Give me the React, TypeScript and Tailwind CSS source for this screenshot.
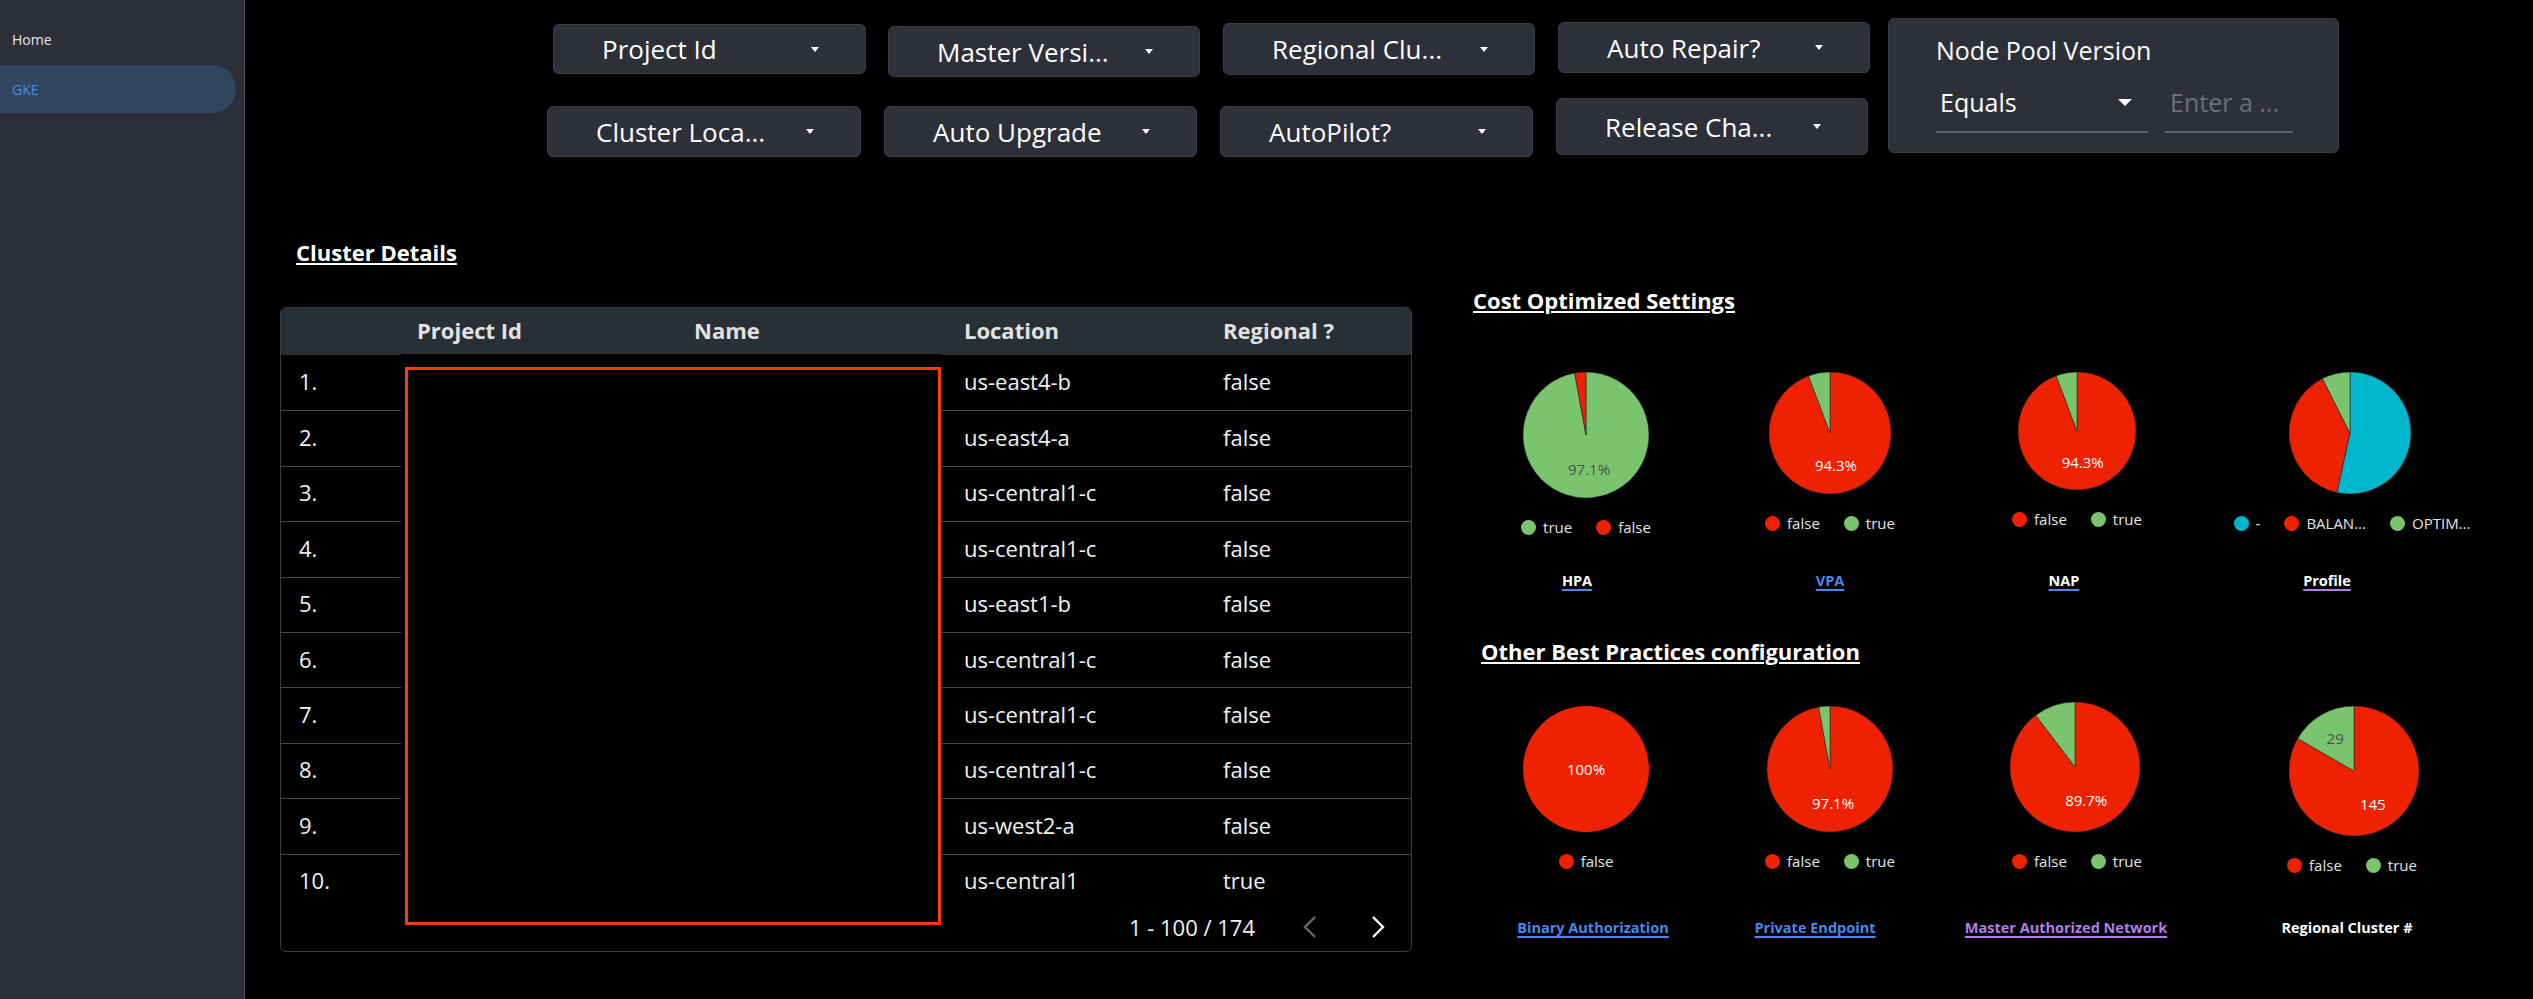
import React from 'react';

type Slice = { value: number; color: string; label?: string; labelColor?: string };
type LegendItem = { color: string; text: string };
type Chart = {
  size: number;
  slices: Slice[];
  labelDist?: number;
  pieClass: string;
  legend: LegendItem[];
  title: string;
  titleClass: string;
};

const RED = '#ee2200';
const GREEN = '#7bc46e';
const CYAN = '#00b6cc';

const FILTER_COLS = [
  {
    colClass: 'w-[319px]',
    top: { label: 'Project Id', className: 'mt-[6px] ml-[6px] h-[50px] w-[313px]' },
    bottom: { label: 'Cluster Loca...', className: 'mt-[32px] h-[51px] w-[314px]' },
  },
  {
    colClass: 'ml-[18px] w-[316px]',
    top: { label: 'Master Versi...', className: 'mt-[8px] ml-[4px] h-[51px] w-[312px]' },
    bottom: { label: 'Auto Upgrade', className: 'mt-[29px] h-[51px] w-[313px]' },
  },
  {
    colClass: 'ml-[20px] w-[315px]',
    top: { label: 'Regional Clu...', className: 'mt-[5px] ml-[3px] h-[52px] w-[312px]' },
    bottom: { label: 'AutoPilot?', className: 'mt-[31px] h-[51px] w-[313px]' },
  },
  {
    colClass: 'ml-[21px] w-[314px]',
    top: { label: 'Auto Repair?', className: 'mt-[4px] ml-[2px] h-[51px] w-[312px]' },
    bottom: { label: 'Release Cha...', className: 'mt-[25px] h-[57px] w-[312px]' },
  },
];

const ROWS = [
  ['1.', 'us-east4-b', 'false'],
  ['2.', 'us-east4-a', 'false'],
  ['3.', 'us-central1-c', 'false'],
  ['4.', 'us-central1-c', 'false'],
  ['5.', 'us-east1-b', 'false'],
  ['6.', 'us-central1-c', 'false'],
  ['7.', 'us-central1-c', 'false'],
  ['8.', 'us-central1-c', 'false'],
  ['9.', 'us-west2-a', 'false'],
  ['10.', 'us-central1', 'true'],
];

const CELL_WIDTHS = ['w-[252px]', 'w-[236px]', 'w-[258px]', 'w-[292px]'];

const LINK_BLUE = 'underline decoration-2 underline-offset-[3px] decoration-[#4a86ee]';
const LINK_PURPLE = 'underline decoration-2 underline-offset-[3px] decoration-[#b07ee6]';

const COST_CHARTS: Chart[] = [
  {
    size: 126,
    slices: [
      { value: 169, color: GREEN, label: '97.1%', labelColor: '#4d4d4d' },
      { value: 5, color: RED },
    ],
    pieClass: '',
    legend: [
      { color: GREEN, text: 'true' },
      { color: RED, text: 'false' },
    ],
    title: 'HPA',
    titleClass: `text-white ${LINK_BLUE} mr-[18px]`,
  },
  {
    size: 122,
    slices: [
      { value: 164, color: RED, label: '94.3%', labelColor: '#ffffff' },
      { value: 10, color: GREEN },
    ],
    pieClass: '',
    legend: [
      { color: RED, text: 'false' },
      { color: GREEN, text: 'true' },
    ],
    title: 'VPA',
    titleClass: `text-[#4a86ee] ${LINK_BLUE}`,
  },
  {
    size: 118,
    slices: [
      { value: 164, color: RED, label: '94.3%', labelColor: '#ffffff' },
      { value: 10, color: GREEN },
    ],
    pieClass: '',
    legend: [
      { color: RED, text: 'false' },
      { color: GREEN, text: 'true' },
    ],
    title: 'NAP',
    titleClass: `text-white ${LINK_BLUE} mr-[26px]`,
  },
  {
    size: 122,
    slices: [
      { value: 93, color: CYAN },
      { value: 68, color: RED },
      { value: 13, color: GREEN },
    ],
    pieClass: 'mr-[4px]',
    legend: [
      { color: CYAN, text: '-' },
      { color: RED, text: 'BALAN...' },
      { color: GREEN, text: 'OPTIM...' },
    ],
    title: 'Profile',
    titleClass: `text-white ${LINK_PURPLE} mr-[50px]`,
  },
];

const OTHER_CHARTS: Chart[] = [
  {
    size: 126,
    slices: [{ value: 174, color: RED, label: '100%', labelColor: '#ffffff' }],
    pieClass: 'mt-[40px]',
    legend: [{ color: RED, text: 'false' }],
    title: 'Binary Authorization',
    titleClass: `text-[#4a86ee] ${LINK_BLUE} ml-[14px]`,
  },
  {
    size: 126,
    slices: [
      { value: 169, color: RED, label: '97.1%', labelColor: '#ffffff' },
      { value: 5, color: GREEN },
    ],
    pieClass: 'mt-[40px]',
    legend: [
      { color: RED, text: 'false' },
      { color: GREEN, text: 'true' },
    ],
    title: 'Private Endpoint',
    titleClass: `text-[#4a86ee] ${LINK_BLUE} mr-[30px]`,
  },
  {
    size: 130,
    slices: [
      { value: 156, color: RED, label: '89.7%', labelColor: '#ffffff' },
      { value: 18, color: GREEN },
    ],
    pieClass: 'mt-[36px] mr-[4px]',
    legend: [
      { color: RED, text: 'false' },
      { color: GREEN, text: 'true' },
    ],
    title: 'Master Authorized Network',
    titleClass: `text-[#b07ee6] ${LINK_PURPLE} mr-[22px]`,
  },
  {
    size: 130,
    slices: [
      { value: 145, color: RED, label: '145', labelColor: '#ffffff' },
      { value: 29, color: GREEN, label: '29', labelColor: '#4d4d4d' },
    ],
    labelDist: 0.58,
    pieClass: 'mt-[40px] ml-[4px]',
    legend: [
      { color: RED, text: 'false' },
      { color: GREEN, text: 'true' },
    ],
    title: 'Regional Cluster #',
    titleClass: 'text-white mr-[10px]',
  },
];

const Caret = ({ big }: { big?: boolean }) =>
  big ? (
    <span className="h-0 w-0 border-x-[7.5px] border-t-[7px] border-x-transparent border-t-white" />
  ) : (
    <span className="h-0 w-0 border-x-[4.5px] border-t-[5px] border-x-transparent border-t-white" />
  );

const FilterBox = ({ label, className }: { label: string; className: string }) => (
  <div
    className={`flex items-center justify-between rounded-[6px] border border-[#3b3e46] bg-[#2d3038] pl-[48px] pr-[46px] text-[26px] leading-none text-white ${className}`}
  >
    <span>{label}</span>
    <Caret />
  </div>
);

const Pie = ({ size, slices, labelDist = 0.54 }: { size: number; slices: Slice[]; labelDist?: number }) => {
  const r = size / 2;
  const total = slices.reduce((s, x) => s + x.value, 0);
  const pt = (a: number, rad: number) => [r + rad * Math.sin(2 * Math.PI * a), r - rad * Math.cos(2 * Math.PI * a)];
  const parts = slices.reduce<{ s: Slice; a0: number; a1: number }[]>((list, s) => {
    const a0 = list.length ? list[list.length - 1].a1 : 0;
    list.push({ s, a0, a1: a0 + s.value / total });
    return list;
  }, []);

  return (
    <svg width={size} height={size} viewBox={`0 0 ${size} ${size}`}>
      {parts.map(({ s, a0, a1 }, i) => {
        if (a1 - a0 >= 0.9999) return <circle key={i} cx={r} cy={r} r={r} fill={s.color} />;
        const [x0, y0] = pt(a0, r);
        const [x1, y1] = pt(a1, r);
        const large = a1 - a0 > 0.5 ? 1 : 0;
        return (
          <path
            key={i}
            d={`M${r},${r} L${x0},${y0} A${r},${r} 0 ${large} 1 ${x1},${y1} Z`}
            fill={s.color}
            stroke="#2a2a2a"
            strokeWidth={0.6}
            strokeLinejoin="round"
          />
        );
      })}
      {parts.map(({ s, a0, a1 }, i) => {
        if (!s.label) return null;
        const [lx, ly] = a1 - a0 >= 0.9999 ? [r, r] : pt((a0 + a1) / 2, r * labelDist);
        return (
          <text
            key={`l${i}`}
            x={lx}
            y={ly}
            fill={s.labelColor}
            fontSize={15}
            fontFamily="'Open Sans', sans-serif"
            textAnchor="middle"
            dominantBaseline="central"
          >
            {s.label}
          </text>
        );
      })}
    </svg>
  );
};

const Legend = ({ items }: { items: LegendItem[] }) => (
  <div className="mt-[19.5px] flex h-[20px] items-center gap-[24px] text-[15px] text-[#e4e4e4]">
    {items.map((it) => (
      <div key={it.text} className="flex items-center gap-[7px]">
        <span className="h-[15px] w-[15px] rounded-full" style={{ backgroundColor: it.color }} />
        <span>{it.text}</span>
      </div>
    ))}
  </div>
);

const ChartRow = ({ charts, blockClass, topClass }: { charts: Chart[]; blockClass: string; topClass: string }) => (
  <div className="flex">
    {charts.map((c, i) => (
      <div key={c.title} className={`flex flex-col items-center ${CELL_WIDTHS[i]}`}>
        <div className={`flex flex-col items-center ${blockClass}`}>
          <div className={`${topClass} ${c.pieClass}`}>
            <Pie size={c.size} slices={c.slices} labelDist={c.labelDist} />
          </div>
          <Legend items={c.legend} />
        </div>
        <div className={`h-[20px] text-[14.5px] font-bold leading-[20px] ${c.titleClass}`}>{c.title}</div>
      </div>
    ))}
  </div>
);

const Chevron = ({ dir, color }: { dir: 'left' | 'right'; color: string }) => (
  <svg width="14" height="24" viewBox="0 0 14 24">
    <polyline
      points={dir === 'left' ? '12,2 2,12 12,22' : '2,2 12,12 2,22'}
      fill="none"
      stroke={color}
      strokeWidth="2.4"
    />
  </svg>
);

export default function App() {
  return (
    <div className="flex h-[999px] w-[2533px] overflow-hidden bg-black font-['Open_Sans',sans-serif] text-white">
      <aside className="w-[245px] shrink-0 border-r border-[#4b4e56] bg-[#2c2f37]">
        <div className="mt-[28px] h-[24px] pl-[12px] text-[14px] leading-[24px] text-[#e6e6e6]">Home</div>
        <div className="mt-[13px] flex h-[48px] w-[236px] items-center rounded-r-full bg-[#2f4560] pl-[12px] text-[14px] text-[#4a8fe4]">
          GKE
        </div>
      </aside>

      <main className="flex flex-1 flex-col">
        <div className="ml-[302px] mt-[18px] flex h-[139px] items-start">
          {FILTER_COLS.map((col) => (
            <div key={col.top.label} className={`flex flex-col ${col.colClass}`}>
              <FilterBox {...col.top} />
              <FilterBox {...col.bottom} />
            </div>
          ))}

          <div className="ml-[18px] h-[135px] w-[451px] rounded-[6px] border border-[#3b3e46] bg-[#2d3038] pl-[47px] pt-[14px]">
            <div className="text-[25px] leading-[34px] text-white">Node Pool Version</div>
            <div className="mt-[18px] flex items-end">
              <div className="flex w-[212px] items-center justify-between border-b-2 border-[#5d6068] pb-[12px] pl-[4px] pr-[16px]">
                <span className="text-[25px] leading-[34px] text-white">Equals</span>
                <Caret big />
              </div>
              <div className="ml-[17px] w-[128px] border-b-2 border-[#5d6068] pb-[12px] pl-[5px] text-[25px] leading-[34px] text-[#6c6f77]">
                Enter a ...
              </div>
            </div>
          </div>
        </div>

        <div className="flex items-start">
          <section className="ml-[35px] w-[1132px]">
            <h2 className="ml-[16px] mt-[79.5px] text-[22px] font-bold leading-[30px] underline decoration-2 underline-offset-[2px]">
              Cluster Details
            </h2>

            <div className="relative mt-[40.5px] overflow-hidden rounded-[6px] border border-[#3a3d44]">
              <div className="grid h-[47px] grid-cols-[121px_277px_270px_259px_1fr] items-center bg-[#283036] pb-[2px] text-[22px] font-bold text-[#e2e2e2]">
                <span />
                <span className="pl-[15px]">Project Id</span>
                <span className="pl-[15px]">Name</span>
                <span className="pl-[15px]">Location</span>
                <span className="pl-[15px]">Regional ?</span>
              </div>

              {ROWS.map(([idx, loc, regional], i) => (
                <div
                  key={idx}
                  className={`grid h-[55.4px] grid-cols-[121px_277px_270px_259px_1fr] items-center pb-[2px] text-[22px] text-[#f2f2f2] ${
                    i > 0 ? 'border-t border-[#45484e]' : ''
                  }`}
                >
                  <span className="pl-[18px]">{idx}</span>
                  <span />
                  <span />
                  <span className="pl-[15px]">{loc}</span>
                  <span className="pl-[15px]">{regional}</span>
                </div>
              ))}

              <div className="flex h-[42px] items-center justify-end pb-[5px] pr-[26px]">
                <span className="text-[22px] text-[#f2f2f2]">1 - 100 / 174</span>
                <span className="ml-[48px]">
                  <Chevron dir="left" color="#6a6a6a" />
                </span>
                <span className="ml-[54px]">
                  <Chevron dir="right" color="#ffffff" />
                </span>
              </div>

              <div className="absolute left-[120px] top-[46px] h-[576px] w-[540px] bg-black">
                <div className="ml-[4px] mt-[13px] h-[558px] w-[536px] border-[3px] border-[#ff3a0a]" />
              </div>
            </div>
          </section>

          <section className="ml-[48px] w-[1038px]">
            <h2 className="ml-[13px] mt-[128px] text-[22px] font-bold leading-[30px] underline decoration-2 underline-offset-[2px]">
              Cost Optimized Settings
            </h2>
            <ChartRow charts={COST_CHARTS} blockClass="h-[256px]" topClass="mt-[57px]" />

            <h2 className="ml-[21px] mt-[45px] text-[22px] font-bold leading-[30px] underline decoration-2 underline-offset-[2px]">
              Other Best Practices configuration
            </h2>
            <ChartRow charts={OTHER_CHARTS} blockClass="h-[252px]" topClass="" />
          </section>
        </div>
      </main>
    </div>
  );
}
